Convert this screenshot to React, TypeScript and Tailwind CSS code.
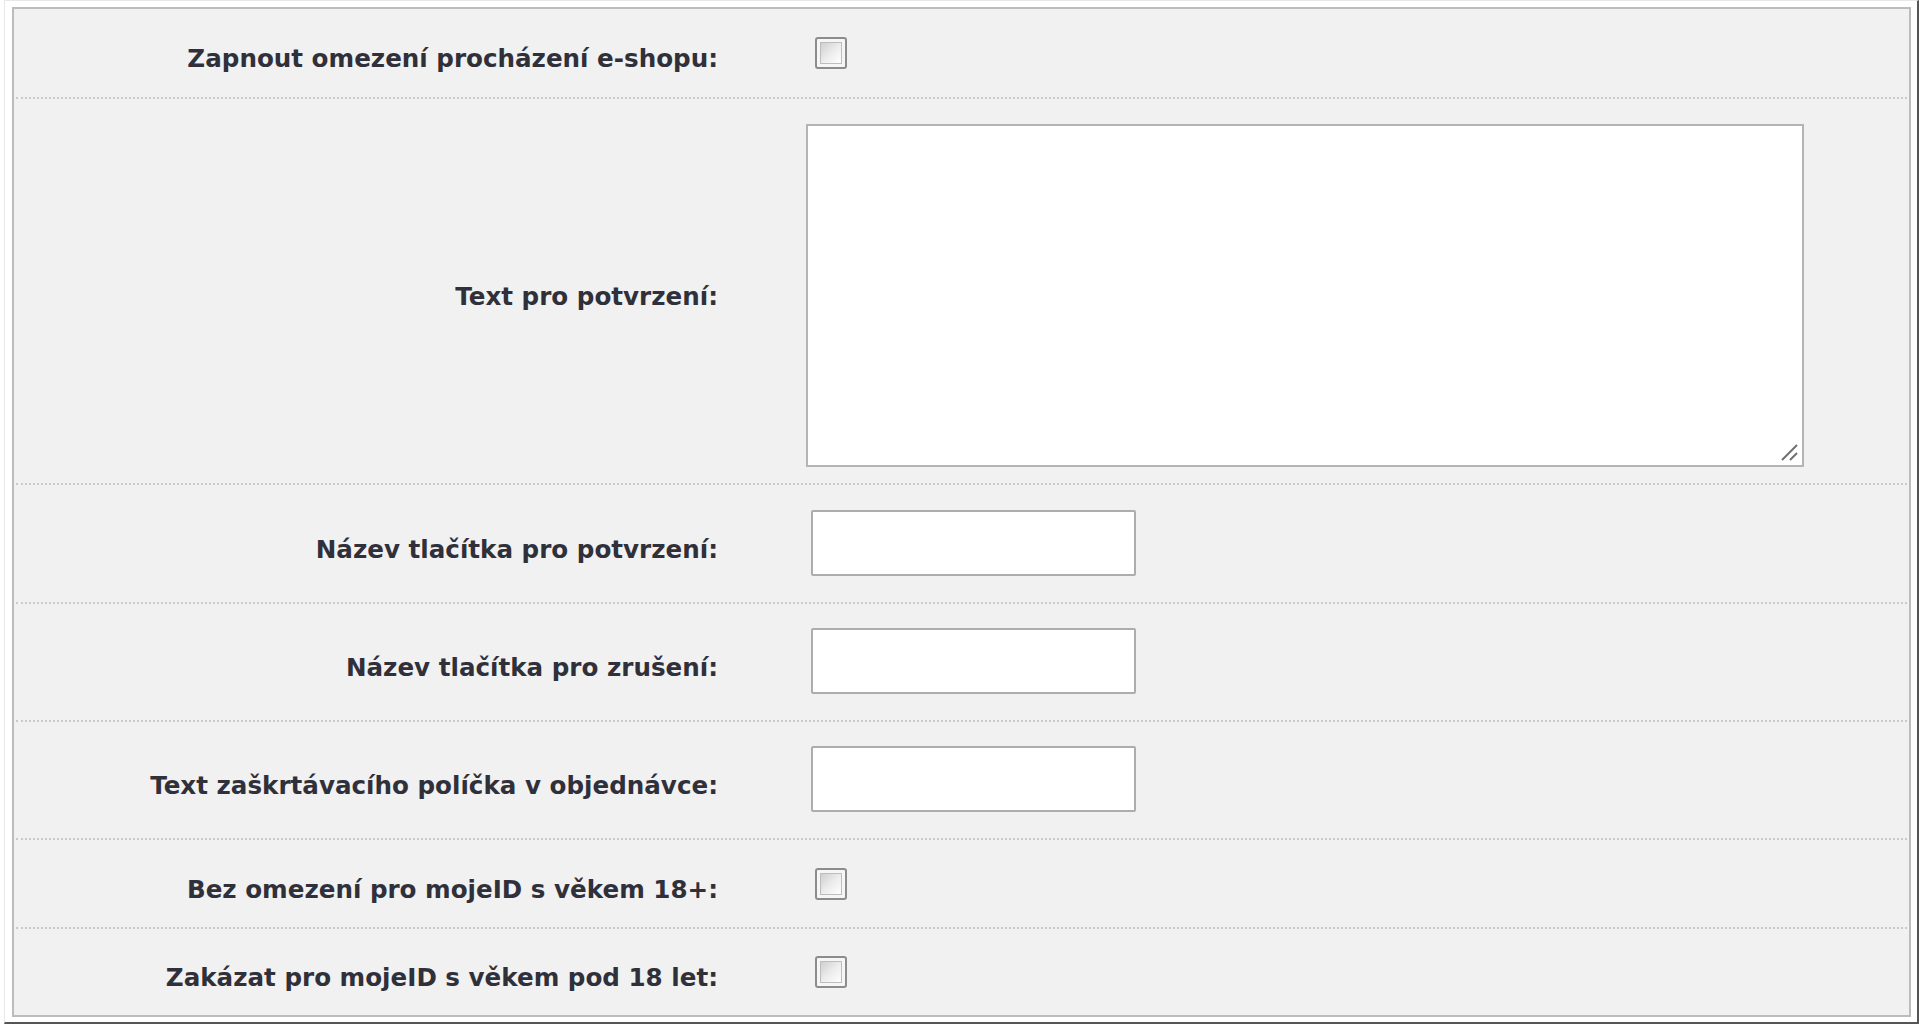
const rows = [
  { label: "Zapnout omezení procházení e-shopu:", kind: "checkbox", h: "h-[90px]" },
  { label: "Text pro potvrzení:", kind: "textarea", h: "h-[386px]" },
  { label: "Název tlačítka pro potvrzení:", kind: "input", h: "h-[119px]" },
  { label: "Název tlačítka pro zrušení:", kind: "input", h: "h-[118px]" },
  { label: "Text zaškrtávacího políčka v objednávce:", kind: "input", h: "h-[118px]" },
  { label: "Bez omezení pro mojeID s věkem 18+:", kind: "checkbox", h: "h-[89px]" },
  { label: "Zakázat pro mojeID s věkem pod 18 let:", kind: "checkbox", h: "h-[86px]" },
];

const Checkbox = () => (
  <div className="ml-[9px] w-[32px] h-[32px] rounded-[3px] border-2 border-[#8c8c8c] bg-[#f6f6f6] p-[3px]">
    <div className="w-full h-full border border-[#bdbdbd] bg-gradient-to-br from-[#cfcfcf] via-[#ececec] to-white" />
  </div>
);

const TextArea = () => (
  <div className="relative mt-[8px] w-[998px] h-[343px] border-2 border-[#b4b4b4] bg-white">
    <svg
      className="absolute right-[3px] bottom-[3px]"
      width="20"
      height="20"
      viewBox="0 0 20 20"
    >
      <line x1="3" y1="18" x2="18" y2="3" stroke="#6f6f6f" strokeWidth="2" />
      <line x1="11" y1="18" x2="18" y2="11" stroke="#6f6f6f" strokeWidth="2" />
    </svg>
  </div>
);

const TextInput = () => (
  <div className="ml-[5px] -mt-[2px] w-[325px] h-[66px] rounded-[2px] border-2 border-[#adadad] bg-white" />
);

export default function App() {
  return (
    <div className="w-[1919px] h-[1024px] bg-white overflow-hidden">
      <div className="ml-[4px] w-[1915px] h-[1024px] border-l border-t border-l-[#e8e8e8] border-t-[#e8e8e8] border-r-2 border-b-2 border-r-[#555] border-b-[#555]">
        <div className="ml-[7px] mt-[6px] w-[1899px] h-[1010px] border-2 border-[#bcbcbc] bg-[#f1f1f1] px-[2px] flex flex-col">
          {rows.map((r, i) => (
            <div
              key={i}
              className={`${r.h} grid grid-cols-[764px_1fr] ${
                i < rows.length - 1 ? "border-b-2 border-dotted border-[#cacaca]" : ""
              }`}
            >
              <div className="flex items-center justify-end pr-[62px] pt-[13px]">
                <span
                  className="text-[24.6px] font-bold text-[#30303a] whitespace-nowrap"
                  style={{ fontFamily: '"DejaVu Sans", Verdana, sans-serif' }}
                >
                  {r.label}
                </span>
              </div>
              <div className="flex items-center pl-[26px]">
                {r.kind === "checkbox" && <Checkbox />}
                {r.kind === "textarea" && <TextArea />}
                {r.kind === "input" && <TextInput />}
              </div>
            </div>
          ))}
        </div>
      </div>
    </div>
  );
}
